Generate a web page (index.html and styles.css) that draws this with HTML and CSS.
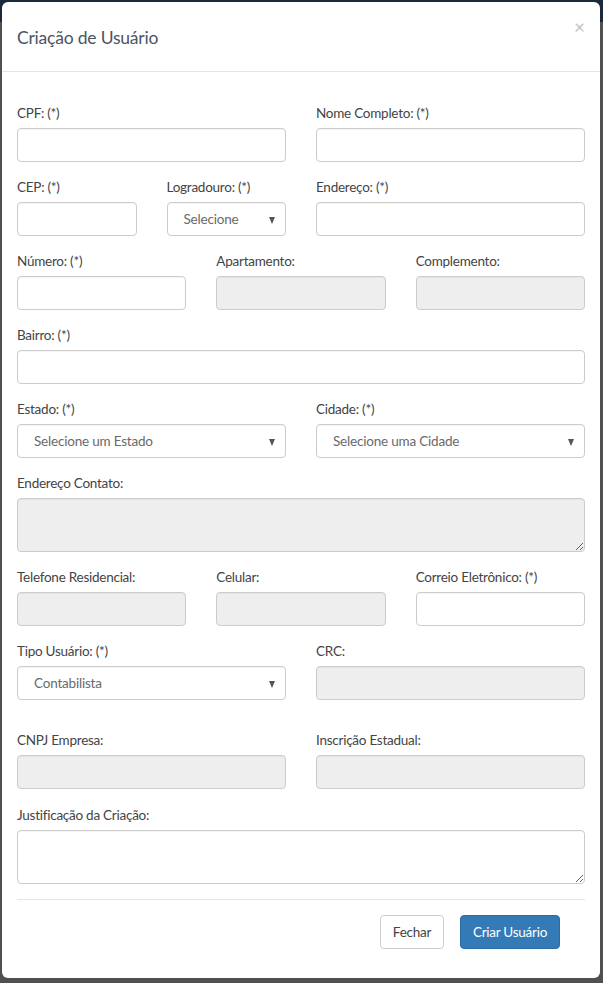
FILE: index.html
```html
<!DOCTYPE html>
<html lang="pt-BR">
<head>
<meta charset="utf-8">
<title>Criação de Usuário</title>
<link rel="stylesheet" href="styles.css">
</head>
<body>
<div class="backdrop">
  <div class="modal">
    <div class="modal-header">
      <h4 class="modal-title">Criação de Usuário</h4>
      <span class="close">×</span>
    </div>
    <div class="modal-body">
      <div class="row cols-2">
        <div class="group"><label>CPF: (*)</label><input class="field" type="text"></div>
        <div class="group"><label>Nome Completo: (*)</label><input class="field" type="text"></div>
      </div>
      <div class="row cols-2">
        <div class="row cols-2 inner">
          <div class="group"><label>CEP: (*)</label><input class="field" type="text"></div>
          <div class="group"><label>Logradouro: (*)</label><div class="field select">Selecione</div></div>
        </div>
        <div class="group"><label>Endereço: (*)</label><input class="field" type="text"></div>
      </div>
      <div class="row cols-3">
        <div class="group"><label>Número: (*)</label><input class="field" type="text"></div>
        <div class="group"><label>Apartamento:</label><input class="field" type="text" disabled></div>
        <div class="group"><label>Complemento:</label><input class="field" type="text" disabled></div>
      </div>
      <div class="row">
        <div class="group"><label>Bairro: (*)</label><input class="field" type="text"></div>
      </div>
      <div class="row cols-2">
        <div class="group"><label>Estado: (*)</label><div class="field select">Selecione um Estado</div></div>
        <div class="group"><label>Cidade: (*)</label><div class="field select">Selecione uma Cidade</div></div>
      </div>
      <div class="row">
        <div class="group"><label>Endereço Contato:</label><textarea class="field area" disabled></textarea></div>
      </div>
      <div class="row cols-3">
        <div class="group"><label>Telefone Residencial:</label><input class="field" type="text" disabled></div>
        <div class="group"><label>Celular:</label><input class="field" type="text" disabled></div>
        <div class="group"><label>Correio Eletrônico: (*)</label><input class="field" type="text"></div>
      </div>
      <div class="row cols-2 tall">
        <div class="group"><label>Tipo Usuário: (*)</label><div class="field select">Contabilista</div></div>
        <div class="group"><label>CRC:</label><input class="field" type="text" disabled></div>
      </div>
      <div class="row cols-2 after-cnpj">
        <div class="group"><label>CNPJ Empresa:</label><input class="field" type="text" disabled></div>
        <div class="group"><label>Inscrição Estadual:</label><input class="field" type="text" disabled></div>
      </div>
      <div class="row">
        <div class="group"><label>Justificação da Criação:</label><textarea class="field area"></textarea></div>
      </div>
      <div class="modal-footer">
        <button class="btn btn-default">Fechar</button>
        <button class="btn btn-primary">Criar Usuário</button>
      </div>
    </div>
  </div>
</div>
</body>
</html>
```

FILE: styles.css
```css
* { box-sizing: border-box; }
html, body { margin: 0; padding: 0; }
body {
  font-family: Lato, "Open Sans", "Liberation Sans", sans-serif;
  font-size: 14px;
  color: #333;
  background: linear-gradient(#1b2a3a 0, #1b2a3a 22px, #505050 22px, #505050 100%);
  height: 983px;
  overflow: hidden;
}
.backdrop { padding: 2px 3px 0 2px; }
.modal {
  width: 598px;
  height: 976px;
  background: #fff;
  border-radius: 6px;
}
.modal-header {
  position: relative;
  padding: 23px 15px 20px;
  border-bottom: 1px solid #e5e5e5;
}
.modal-title {
  margin: 0;
  font-size: 17.5px;
  font-weight: 400;
  line-height: 26px;
  color: #4a5562;
  letter-spacing: -0.2px;
}
.close {
  position: absolute;
  right: 15px;
  top: 14px;
  font-size: 19px;
  line-height: 22px;
  color: #c4c4c4;
}
.modal-body { padding: 31px 15px 0; }
.row { display: grid; grid-template-columns: 1fr; column-gap: 30px; }
.row.cols-2 { grid-template-columns: 1fr 1fr; }
.row.cols-3 { grid-template-columns: 1fr 1fr 1fr; }
.row.inner { column-gap: 30px; }
.row.tall { margin-bottom: 15px; }
.row.after-cnpj { margin-bottom: 1px; }
.group { margin-bottom: 15px; min-width: 0; }
label {
  display: block;
  height: 20px;
  line-height: 20px;
  margin-bottom: 5px;
  font-size: 13.5px;
  letter-spacing: -0.25px;
  color: #444;
}
.field {
  display: block;
  width: 100%;
  height: 34px;
  margin: 0;
  padding: 6px 16px;
  border: 1px solid #ccc;
  border-radius: 4px;
  background: #fff;
  font-family: inherit;
  font-size: 13.5px;
  color: #6a6a6a;
  box-shadow: inset 0 1px 1px rgba(0,0,0,.04);
}
.field:disabled { background: #eee; }
.select {
  position: relative;
  line-height: 20px;
  letter-spacing: -0.2px;
}
.select::after {
  content: "";
  position: absolute;
  right: 10px;
  top: 14px;
  border-left: 3.5px solid transparent;
  border-right: 3.5px solid transparent;
  border-top: 7px solid #555;
}
.area { height: 54px; resize: vertical; }
.modal-footer {
  border-top: 1px solid #e5e5e5;
  padding: 15px 25px 0 0;
  display: flex;
  justify-content: flex-end;
  gap: 16px;
}
.btn {
  height: 34px;
  padding: 0 11px;
  font-family: inherit;
  font-size: 13.5px;
  letter-spacing: -0.25px;
  border-radius: 4px;
  border: 1px solid #ccc;
  cursor: pointer;
}
.btn-default { background: #fff; color: #444; width: 64px; }
.btn-primary { background: #337ab7; border-color: #2e6da4; color: #fff; width: 100px; }
```
